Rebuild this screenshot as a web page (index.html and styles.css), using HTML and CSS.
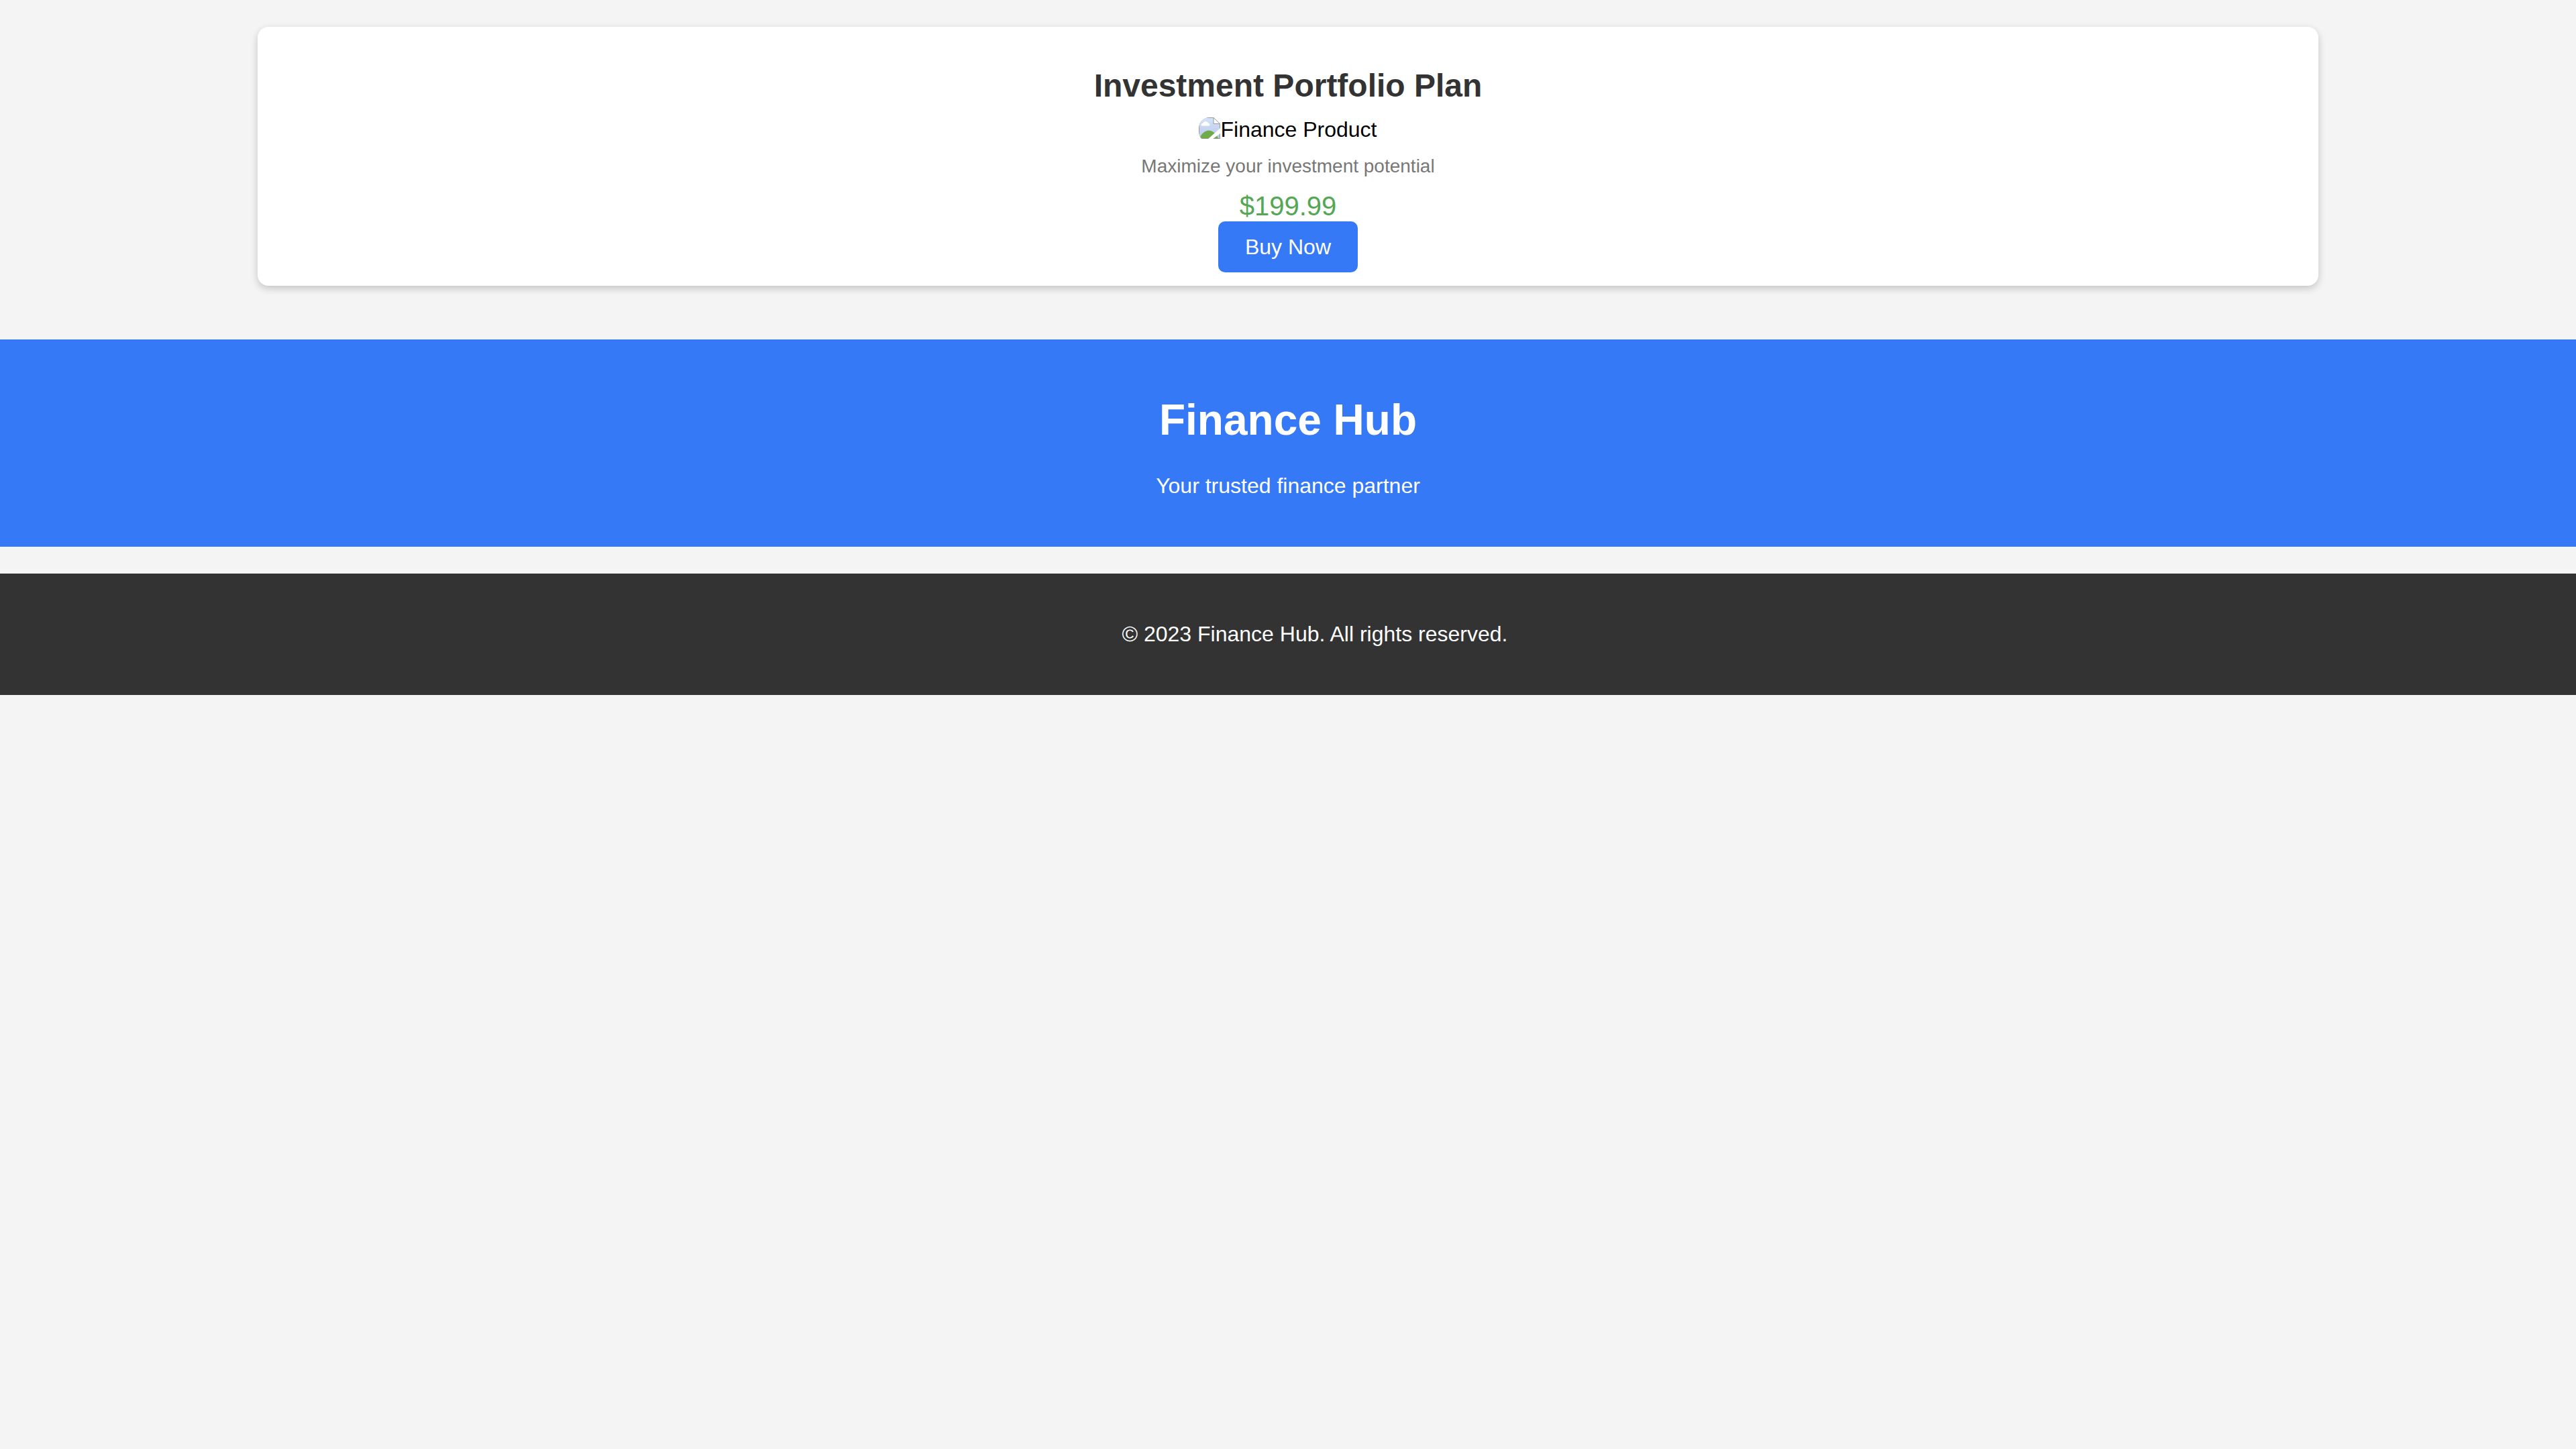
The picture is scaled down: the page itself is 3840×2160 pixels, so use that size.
FILE: index.html
```html
<!DOCTYPE html>
<html lang="en">
<head>
<meta charset="utf-8">
<title>Finance Hub</title>
<link rel="stylesheet" href="styles.css">
</head>
<body>
<main class="card">
  <h2 class="card-title">Investment Portfolio Plan</h2>
  <div class="media">
    <svg class="media-icon" viewBox="0 0 32 32" aria-hidden="true">
      <defs>
        <linearGradient id="sky" x1="0" y1="0" x2="0" y2="1"><stop offset="0" stop-color="#d6e2f8"/><stop offset="1" stop-color="#b9c9ec"/></linearGradient>
        <clipPath id="round"><path d="M16 0H32V37H16A16 16 0 0 1 0 21V16A16 16 0 0 1 16 0Z"/></clipPath>
      </defs>
      <g clip-path="url(#round)">
        <path d="M0 0H22L32 10V32H0Z" fill="#999"/>
        <path d="M1 1H22L31 10V31H1Z" fill="url(#sky)"/>
        <path d="M5 12.500C3 12.500 3 9 6 9C7 5 13 5 14 8.500C17 9 17 12.500 15 12.500Z" fill="#fff"/>
        <path d="M1 31C5 23 10 19.500 15 19.500C20 19.500 26 24 29 31Z" fill="#6fac49"/>
        <path d="M14 32L32 16V24L21 32Z" fill="#fff"/>
        <path d="M22 0H32V10Z" fill="#fff"/>
        <path d="M22 0.500V9.500H31.500Z" fill="#fff" stroke="#999"/>
      </g>
    </svg>
    <span>Finance Product</span>
  </div>
  <p class="description">Maximize your investment potential</p>
  <div class="price">$199.99</div>
  <button class="buy" type="button">Buy Now</button>
</main>
<header class="hero">
  <h1 class="hero-title">Finance Hub</h1>
  <p class="hero-text">Your trusted finance partner</p>
</header>
<footer class="footer">
  <p class="footer-text">© 2023 Finance Hub. All rights reserved.</p>
</footer>
</body>
</html>
```
FILE: styles.css
```css
* {
  box-sizing: border-box;
}

body {
  margin: 0;
  background: #f4f4f4;
  color: #000;
  font: 32px/37px "Liberation Sans", Arial, sans-serif;
  text-align: center;
}

.card {
  width: 80%;
  margin: 40px auto 80px;
  padding: 20px;
  background: #fff;
  border-radius: 16px;
  box-shadow: 0 4px 12px rgba(0, 0, 0, 0.2);
}

.card-title {
  margin: 40px 0 20px;
  color: #333;
  font-size: 48px;
  line-height: 55px;
}

.media {
  display: flex;
  justify-content: center;
  align-items: flex-start;
}

.media-icon {
  width: 32px;
  height: 32px;
}

.description {
  margin: 20px 0;
  color: #777;
  font-size: 28px;
  line-height: 32px;
}

.price {
  color: #54a754;
  font-size: 40px;
  line-height: 46px;
}

.buy {
  display: block;
  margin: 0 auto;
  padding: 20px 40px;
  border: 0;
  border-radius: 10px;
  background: #3579f7;
  color: #fff;
  font: inherit;
  line-height: 36px;
}

.hero {
  padding: 40px;
  background: #3579f7;
  color: #fff;
}

.hero-title {
  margin: 43px 0;
  font-size: 64px;
  line-height: 74px;
}

.hero-text {
  margin: 0 0 32px;
}

.footer {
  margin-top: 40px;
  padding: 40px 0 40px 80px;
  background: #333;
  color: #fff;
}

.footer-text {
  margin: 32px 0;
}

.hero,
.footer {
  display: flow-root;
}
```
